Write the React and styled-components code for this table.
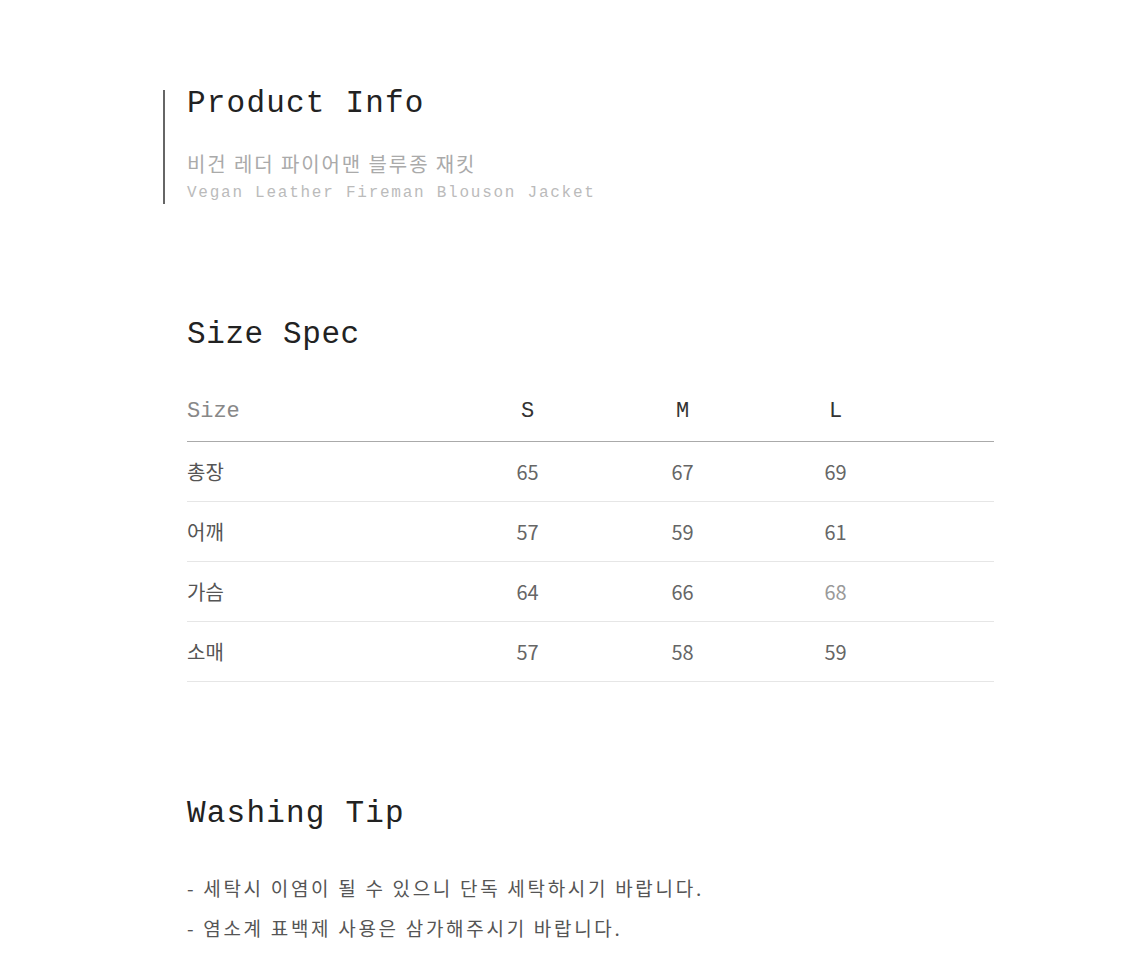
import React from 'react';
import styled, { createGlobalStyle } from 'styled-components';

const GlobalStyle = createGlobalStyle`
  body {
    margin: 0;
    background: #fff;
    font-family: "Noto Sans CJK KR", "Noto Sans", sans-serif;
  }
`;

const mono = `"Liberation Mono", "Noto Sans CJK KR", monospace`;

const Page = styled.div`
  width: 1125px;
  min-height: 975px;
  padding: 90px 0 0 163px;
  box-sizing: border-box;
`;

const InfoBlock = styled.div`
  border-left: 2px solid #666;
  padding: 0 0 0 22px;
  height: 114px;
  box-sizing: border-box;
`;

const SectionTitle = styled.h2`
  margin: 0;
  font-family: ${mono};
  font-weight: 400;
  font-size: 31px;
  line-height: 28px;
  letter-spacing: ${props => props.spacing || '1.2px'};
  color: #222;
`;

const KoreanName = styled.div`
  margin-top: 34px;
  font-size: 20px;
  line-height: 24px;
  letter-spacing: 1.9px;
  color: #aaa;
`;

const EnglishName = styled.div`
  margin-top: 7px;
  font-family: ${mono};
  font-size: 16px;
  line-height: 20px;
  letter-spacing: 1.75px;
  color: #bbb;
`;

const Section = styled.section`
  margin-top: ${props => props.top};
  padding-left: 24px;
`;

const Table = styled.div`
  width: 807px;
  margin-top: 33px;
`;

const Row = styled.div`
  display: grid;
  grid-template-columns: 262px 157px 153px 153px 1fr;
  align-items: center;
  height: 60px;
  box-sizing: border-box;
  border-bottom: 1px solid ${props => (props.head ? '#aaa' : '#e6e6e6')};
`;

const HeadCell = styled.div`
  font-family: ${mono};
  font-size: 22px;
  color: ${props => (props.first ? '#888' : '#333')};
  text-align: ${props => (props.first ? 'left' : 'center')};
`;

const Cell = styled.div`
  font-size: 20px;
  color: ${props => props.tone || '#666'};
  text-align: ${props => (props.first ? 'left' : 'center')};
`;

const TipList = styled.ul`
  list-style: none;
  margin: 40px 0 0;
  padding: 0;
`;

const Tip = styled.li`
  font-size: 19px;
  line-height: 40px;
  letter-spacing: 2.7px;
  color: #555;
`;

const sizes = ['S', 'M', 'L'];

const rows = [
  { label: '총장', values: ['65', '67', '69'] },
  { label: '어깨', values: ['57', '59', '61'] },
  { label: '가슴', values: ['64', '66', '68'], light: 2 },
  { label: '소매', values: ['57', '58', '59'] },
];

const tips = [
  '- 세탁시 이염이 될 수 있으니 단독 세탁하시기 바랍니다.',
  '- 염소계 표백제 사용은 삼가해주시기 바랍니다.',
];

const App = () => (
  <Page>
    <GlobalStyle />
    <InfoBlock>
      <SectionTitle>Product Info</SectionTitle>
      <KoreanName>비건 레더 파이어맨 블루종 재킷</KoreanName>
      <EnglishName>Vegan Leather Fireman Blouson Jacket</EnglishName>
    </InfoBlock>

    <Section top="117px">
      <SectionTitle spacing="0.6px">Size Spec</SectionTitle>
      <Table>
        <Row head>
          <HeadCell first>Size</HeadCell>
          {sizes.map(s => (
            <HeadCell key={s}>{s}</HeadCell>
          ))}
        </Row>
        {rows.map(row => (
          <Row key={row.label}>
            <Cell first tone="#555">{row.label}</Cell>
            {row.values.map((v, i) => (
              <Cell key={i} tone={row.light === i ? '#999' : '#666'}>{v}</Cell>
            ))}
          </Row>
        ))}
      </Table>
    </Section>

    <Section top="118px">
      <SectionTitle spacing="1.2px">Washing Tip</SectionTitle>
      <TipList>
        {tips.map(t => (
          <Tip key={t}>{t}</Tip>
        ))}
      </TipList>
    </Section>
  </Page>
);

export default App;
